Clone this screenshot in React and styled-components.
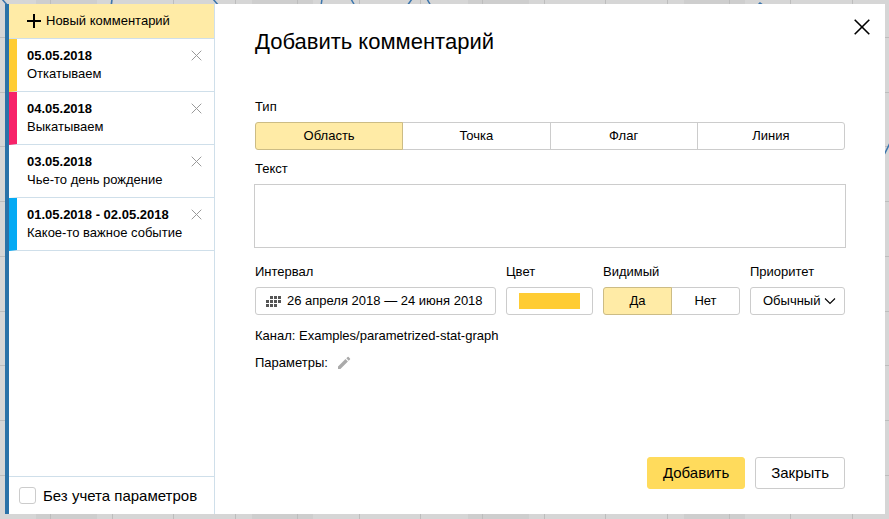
import React, { useState } from "react";
import styled, { createGlobalStyle } from "styled-components";

const GlobalStyle = createGlobalStyle`
  * { box-sizing: border-box; }
  html, body { margin: 0; }
  body {
    background: #d6d6d6;
    color: #000;
    font-family: "Liberation Sans", Arial, sans-serif;
    font-size: 13px;
    line-height: 18px;
  }
  button, input, select, textarea { font: inherit; color: inherit; margin: 0; }
  button { cursor: pointer; }
  svg { flex: none; }
`;

const Page = styled.div`
  position: relative;
  display: flex;
  min-height: 100vh;
  padding: 4px 4px 5px 5px;
`;

const Chart = styled.svg`
  position: absolute;
  inset: 0;
  width: 100%;
  height: 100%;
`;

const Dialog = styled.div`
  position: relative;
  flex: 1;
  display: flex;
  background: #fff;
  border-left: 4px solid #2a72a8;
`;

const Sidebar = styled.aside`
  flex: none;
  width: 206px;
  display: flex;
  flex-direction: column;
  border-right: 1px solid #cfdfea;
`;

const NewComment = styled.button`
  display: flex;
  align-items: center;
  gap: 5px;
  height: 35px;
  padding: 0 18px;
  border: 0;
  border-bottom: 1px solid #cfdfea;
  background: #ffeba6;
  white-space: nowrap;
`;

const CommentList = styled.ul`
  flex: 1;
  margin: 0;
  padding: 0;
  list-style: none;
`;

const Comment = styled.li`
  display: flex;
  justify-content: space-between;
  align-items: flex-start;
  height: 53px;
  padding: 8px 12px 0 10px;
  border-left: 8px solid ${(p) => p.$color};
  border-bottom: 1px solid #cfdfea;
  white-space: nowrap;
`;

const CommentBody = styled.div`
  width: 0;
  flex: 1;
`;

const CommentDate = styled.div`
  font-weight: bold;
`;

const IconButton = styled.button`
  display: flex;
  padding: 0;
  border: 0;
  background: none;
`;

const RemoveButton = styled(IconButton)`
  padding-top: 3px;
`;

const SidebarFooter = styled.label`
  display: flex;
  align-items: center;
  gap: 7px;
  height: 38px;
  padding: 0 10px;
  border-top: 1px solid #cfdfea;
  font-size: 15px;
  white-space: nowrap;
`;

const Checkbox = styled.input`
  appearance: none;
  width: 17px;
  height: 17px;
  border: 1px solid #ccc;
  border-radius: 3px;
  background: #fff;
  &:checked { background: #ffdb5c; }
`;

const Main = styled.form`
  flex: 1;
  min-width: 0;
  display: flex;
  flex-direction: column;
  padding: 24px 40px 25px;
`;

const CloseButton = styled(IconButton)`
  position: absolute;
  top: 15px;
  right: 15px;
`;

const Title = styled.h1`
  margin: 0 0 42px;
  font-size: 22px;
  line-height: 28px;
  font-weight: normal;
`;

const Field = styled.div`
  display: flex;
  flex-direction: column;
  gap: 6px;
  min-width: 0;
`;

const Fields = styled.div`
  display: flex;
  flex-direction: column;
  gap: 10px;
`;

const FieldRow = styled.div`
  display: grid;
  grid-template-columns: 241fr 87fr 137fr 95fr;
  gap: 10px;
  margin-top: 5px;
`;

const Segments = styled.div`
  display: flex;
  height: 28px;
`;

const Segment = styled.label`
  flex: 1 1 0;
  display: flex;
  align-items: center;
  justify-content: center;
  border: 1px solid #ccc;
  cursor: pointer;
  &:not(:first-child) { margin-left: -1px; }
  &:first-child { border-radius: 3px 0 0 3px; }
  &:last-child { border-radius: 0 3px 3px 0; }
  &:has(input:checked) {
    z-index: 1;
    background: #ffeba6;
    border-color: #ccbc85;
  }
`;

const HiddenRadio = styled.input`
  appearance: none;
  position: absolute;
  width: 0;
  height: 0;
`;

const TextArea = styled.textarea`
  display: block;
  height: 64px;
  margin: 0 -1px;
  padding: 6px 8px;
  border: 1px solid #ccc;
  border-radius: 0;
  resize: none;
  outline: 0;
`;

const Control = styled.button`
  display: flex;
  align-items: center;
  height: 28px;
  border: 1px solid #ccc;
  border-radius: 3px;
  background: #fff;
  white-space: nowrap;
`;

const DateButton = styled(Control)`
  gap: 6px;
  padding: 0 10px;
`;

const ColorButton = styled(Control)`
  padding: 0 12px;
`;

const Swatch = styled.span`
  flex: 1;
  height: 16px;
  background: #ffcc33;
`;

const SelectBox = styled.div`
  position: relative;
  display: flex;
`;

const Select = styled.select`
  appearance: none;
  width: 100%;
  height: 28px;
  padding: 0 20px 0 12px;
  border: 1px solid #ccc;
  border-radius: 3px;
  background: #fff;
`;

const Chevron = styled.svg`
  position: absolute;
  right: 9px;
  top: 10px;
  pointer-events: none;
`;

const Info = styled.div`
  display: flex;
  align-items: center;
  gap: 9px;
  margin-top: ${(p) => (p.$first ? 12 : 9)}px;
`;

const Footer = styled.div`
  display: flex;
  justify-content: flex-end;
  gap: 10px;
  margin-top: auto;
`;

const ActionButton = styled.button`
  height: 32px;
  padding: 0 15px;
  border: 1px solid ${(p) => (p.$primary ? "#ffdb5c" : "#ccc")};
  border-radius: 3px;
  background: ${(p) => (p.$primary ? "#ffdb5c" : "#fff")};
  font-size: 15px;
`;

const COMMENTS = [
  { date: "05.05.2018", text: "Откатываем", color: "#ffcc33" },
  { date: "04.05.2018", text: "Выкатываем", color: "#f72369" },
  { date: "03.05.2018", text: "Чье-то день рождение", color: "transparent" },
  { date: "01.05.2018 - 02.05.2018", text: "Какое-то важное событие", color: "#04aaf4" },
];

const DATE_DOTS = [
  [4, 0], [8, 0], [12, 0],
  [0, 4], [4, 4], [8, 4], [12, 4],
  [0, 8], [4, 8], [8, 8],
];

const range = (n) => Array.from({ length: n }, (_, i) => i);

function BackgroundChart() {
  return (
    <Chart viewBox="0 0 889 519" preserveAspectRatio="none" aria-hidden="true">
      {range(4).map((i) => (
        <rect key={i} x={36 + i * 216} y="0" width="61" height="519" fill="#cecece" />
      ))}
      <g stroke="#bdbdbd" shapeRendering="crispEdges">
        {range(14).map((i) => {
          const x = Math.round(50 + i * 61.7) + 0.5;
          return <path key={i} d={`M${x} 0V519`} />;
        })}
        {range(9).map((i) => {
          const y = Math.round(37 + i * 54.7) + 0.5;
          return <path key={i} d={`M0 ${y}H889`} />;
        })}
      </g>
      <path
        d="M2 -1L8 6M112 -1L111 6M213 -1L219 6M322 -1L321 6M351 -1L355 6M412 -1L407 6M427 -1L431 6M757 6L760 3L764 6M883 157L890 143"
        fill="none"
        stroke="#3c76ad"
        strokeWidth="1.5"
      />
    </Chart>
  );
}

function Cross({ size, color, width }) {
  return (
    <svg width={size} height={size} viewBox={`0 0 ${size} ${size}`} aria-hidden="true">
      <path
        d={`M0.7 0.7L${size - 0.7} ${size - 0.7}M${size - 0.7} 0.7L0.7 ${size - 0.7}`}
        stroke={color}
        strokeWidth={width}
      />
    </svg>
  );
}

function SegmentGroup({ name, label, options }) {
  const [value, setValue] = useState(options[0]);
  return (
    <Segments role="radiogroup" aria-label={label}>
      {options.map((option) => (
        <Segment key={option}>
          <HiddenRadio
            type="radio"
            name={name}
            checked={value === option}
            onChange={() => setValue(option)}
          />
          {option}
        </Segment>
      ))}
    </Segments>
  );
}

export default function App() {
  return (
    <Page>
      <GlobalStyle />
      <BackgroundChart />
      <Dialog role="dialog" aria-labelledby="title">
        <Sidebar>
          <NewComment type="button">
            <svg width="14" height="14" viewBox="0 0 14 14" aria-hidden="true">
              <path d="M7 0V14M0 7H14" stroke="#000" strokeWidth="2" />
            </svg>
            Новый комментарий
          </NewComment>
          <CommentList>
            {COMMENTS.map((c) => (
              <Comment key={c.date} $color={c.color}>
                <CommentBody>
                  <CommentDate>{c.date}</CommentDate>
                  {c.text}
                </CommentBody>
                <RemoveButton type="button" aria-label={`Удалить ${c.date}`}>
                  <Cross size={11} color="#999" width={1} />
                </RemoveButton>
              </Comment>
            ))}
          </CommentList>
          <SidebarFooter>
            <Checkbox type="checkbox" />
            Без учета параметров
          </SidebarFooter>
        </Sidebar>
        <Main onSubmit={(e) => e.preventDefault()}>
          <Title id="title">Добавить комментарий</Title>
          <Fields>
            <Field>
              <span>Тип</span>
              <SegmentGroup name="type" label="Тип" options={["Область", "Точка", "Флаг", "Линия"]} />
            </Field>
            <Field>
              <label htmlFor="text">Текст</label>
              <TextArea id="text" />
            </Field>
            <FieldRow>
              <Field>
                <label htmlFor="interval">Интервал</label>
                <DateButton type="button" id="interval">
                  <svg width="15" height="11" viewBox="0 0 15 11" fill="#555" aria-hidden="true">
                    {DATE_DOTS.map(([x, y]) => (
                      <rect key={`${x}-${y}`} x={x} y={y} width="3" height="3" />
                    ))}
                  </svg>
                  26 апреля 2018 — 24 июня 2018
                </DateButton>
              </Field>
              <Field>
                <label htmlFor="color">Цвет</label>
                <ColorButton type="button" id="color">
                  <Swatch />
                </ColorButton>
              </Field>
              <Field>
                <span>Видимый</span>
                <SegmentGroup name="visible" label="Видимый" options={["Да", "Нет"]} />
              </Field>
              <Field>
                <label htmlFor="priority">Приоритет</label>
                <SelectBox>
                  <Select id="priority">
                    <option>Обычный</option>
                  </Select>
                  <Chevron width="12" height="8" viewBox="0 0 12 8" aria-hidden="true">
                    <path d="M1 1.5L6 6.5L11 1.5" fill="none" stroke="#000" strokeWidth="1.1" />
                  </Chevron>
                </SelectBox>
              </Field>
            </FieldRow>
          </Fields>
          <Info $first>Канал: Examples/parametrized-stat-graph</Info>
          <Info>
            Параметры:
            <IconButton type="button" aria-label="Изменить параметры">
              <svg width="14" height="14" viewBox="0 0 14 14" fill="#aaa" aria-hidden="true">
                <path d="M1 10.6L8.5 3.1L10.9 5.5L3.4 13H1ZM9.3 2.3L10.6 1Q11.1 0.6 11.6 1L13 2.4Q13.4 2.9 13 3.4L11.7 4.7Z" />
              </svg>
            </IconButton>
          </Info>
          <Footer>
            <ActionButton type="submit" $primary>Добавить</ActionButton>
            <ActionButton type="button">Закрыть</ActionButton>
          </Footer>
        </Main>
        <CloseButton type="button" aria-label="Закрыть окно">
          <Cross size={16} color="#000" width={1.6} />
        </CloseButton>
      </Dialog>
    </Page>
  );
}
